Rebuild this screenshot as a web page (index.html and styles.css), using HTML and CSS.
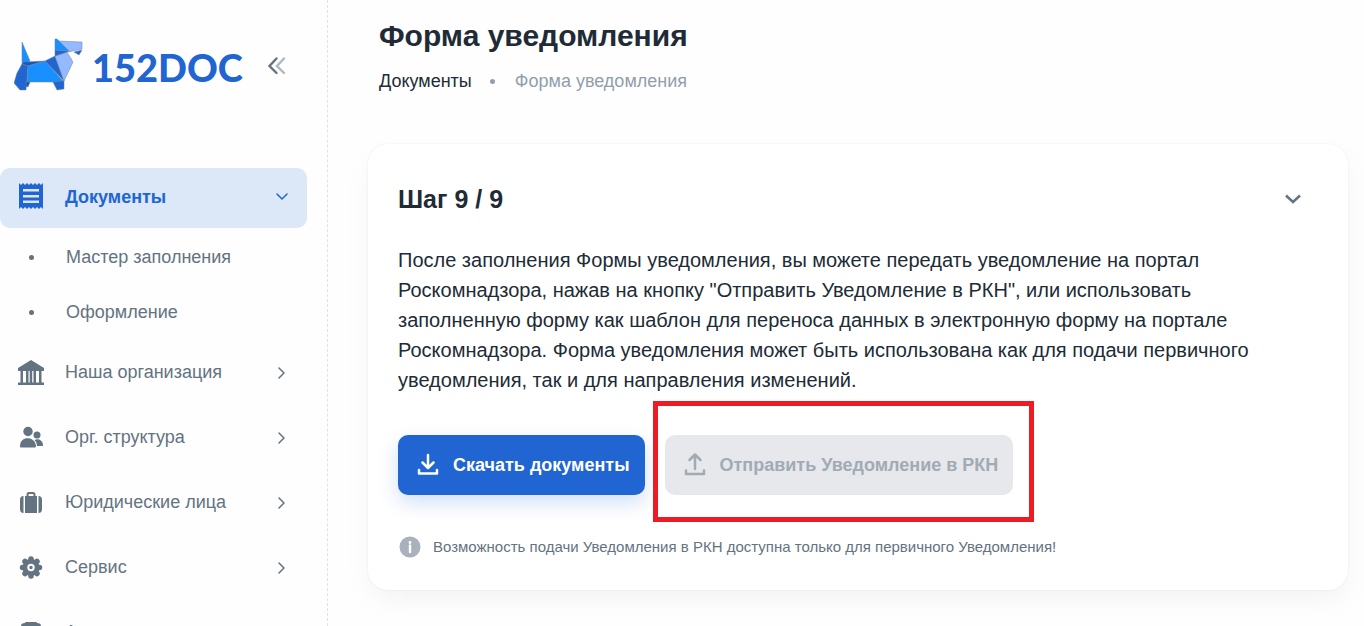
FILE: index.html
```
<!DOCTYPE html>
<html lang="ru">

<head>
    <meta charset="UTF-8">
    <meta name="viewport" content="width=device-width, initial-scale=1">
    <title>Форма уведомления</title>
    <link rel="stylesheet" href="styles.css">
</head>

<body>
    <aside class="sidebar">
        <div class="brand">
            <a class="logo" href="#" aria-label="152DOC">
                <svg class="logo-dog" viewBox="0 0 70 54" aria-hidden="true">
                    <g stroke="#6f8194" stroke-width="0.5" stroke-linejoin="round">
                        <path fill="#1890ff" d="M8 4 L16 23 L8 27 Z" />
                        <path fill="#2065d1" d="M8 26 L14 28 L13 42 L12 52 L6 52 L0 45 L3 35 Z" />
                        <path fill="#1a56bd" d="M8 26 L10 24 L31 23 L14 28 Z" />
                        <path fill="#1890ff" d="M14 28 L31 23 L50 44 L13 44 Z" />
                        <path fill="#2065d1" d="M31 23 L41 18 L50 43 Z" />
                        <path fill="#93b9ff" d="M41 18 L53 14 L59 24 L50 43 Z" />
                        <path fill="#2065d1" d="M41 12 L56 13 L41 18 Z" />
                        <path fill="#93b9ff" d="M44 3 L68 4 L68 11 L54 14 Z" />
                        <path fill="#1890ff" d="M41 1 L43 1 L55 13 L41 12 Z" />
                        <path fill="#2065d1" d="M60 14 L68 12 L65 17 Z" />
                        <path fill="#2065d1" d="M39 44 L50 43 L50 51 L43 52 Z" />
                        <path fill="#1a56bd" d="M12 44 L16 44 L14 49 L12 48 Z" />
                    </g>
                </svg>
                <span class="logo-text">152DOC</span>
            </a>
            <button class="collapse" type="button" aria-label="Свернуть меню">
                <svg viewBox="0 0 20 20" fill="none" stroke="currentColor" stroke-width="2.400" stroke-linecap="round">
                    <path d="M9.500 3.500 L2.500 11 L9.500 18" />
                    <path opacity="0.5" d="M17 3.500 L10 11 L17 18" />
                </svg>
            </button>
        </div>

        <nav class="menu">
            <a class="item active" href="#">
                <svg class="icon" viewBox="0 0 28 28" fill="currentColor">
                    <path fill-rule="evenodd" d="M2 0 L4 2 L6 0 L8 2 L10 0 L12 2 L14 0 L16 2 L18 0 L20 2 L22 0 L24 2 L26 0 V26 L24 24 L22 26 L20 24 L18 26 L16 24 L14 26 L12 24 L10 26 L8 24 L6 26 L4 24 L2 26 Z M6 6 V8.500 H22 V6 Z M6 12 V14.500 H22 V12 Z M6 17.500 V20 H22 V17.500 Z" />
                </svg>
                <span>Документы</span>
                <svg class="arrow" viewBox="0 0 16 16"><path d="M3 5 L8 10 L13 5" /></svg>
            </a>
            <ul class="submenu">
                <li><a class="subitem" href="#">Мастер заполнения</a></li>
                <li><a class="subitem" href="#">Оформление</a></li>
            </ul>
            <a class="item" href="#">
                <svg class="icon" viewBox="0 0 28 28" fill="currentColor">
                    <path d="M14 2 L27 10 V13 H1 V10 Z M3.500 13 H6 V25 H3.500 Z M9 13 H11.500 V25 H9 Z M16.500 13 H19 V25 H16.500 Z M22 13 H24.500 V25 H22 Z M12.700 13 H15.200 V25 H12.700 Z M1 24.500 H27 V27 H1 Z" />
                </svg>
                <span>Наша организация</span>
                <svg class="arrow" viewBox="0 0 16 16"><path d="M5 4 L10 9 L5 14" /></svg>
            </a>
            <a class="item" href="#">
                <svg class="icon" viewBox="0 0 28 28" fill="currentColor">
                    <circle cx="11" cy="8.500" r="4.700" />
                    <circle cx="20" cy="12" r="3.500" />
                    <path d="M3 23 C3 12.500 18 12.500 19 23 C19 24.500 18.500 24.500 17 24.500 H5 C3 24.500 3 24.500 3 23 Z" />
                    <path d="M17.500 17 C22 15 26 18 26 22 C26 23 25.500 23 25 23 H20 C20 21 19 18.500 17.500 17 Z" />
                </svg>
                <span>Орг. структура</span>
                <svg class="arrow" viewBox="0 0 16 16"><path d="M5 4 L10 9 L5 14" /></svg>
            </a>
            <a class="item" href="#">
                <svg class="icon" viewBox="0 0 28 28" fill="currentColor">
                    <path fill-rule="evenodd" d="M9.500 8 V7 Q9.500 4 12 4 H16 Q18.500 4 18.500 7 V8 H20 V25 H8 V8 Z M11.500 8 H16.500 V7 Q16.500 6 15.500 6 H12.500 Q11.500 6 11.500 7 Z" />
                    <path d="M6.500 8 V25 Q3 25 3 21 V12 Q3 8 6.500 8 Z M21.500 8 V25 Q25 25 25 21 V12 Q25 8 21.500 8 Z" />
                </svg>
                <span>Юридические лица</span>
                <svg class="arrow" viewBox="0 0 16 16"><path d="M5 4 L10 9 L5 14" /></svg>
            </a>
            <a class="item" href="#">
                <svg class="icon" viewBox="0 0 28 28">
                    <g stroke="currentColor" stroke-width="5.500" stroke-linecap="round">
                        <path d="M14 6 V23 M5.500 14.500 H22.500 M8 8.500 L20 20.500 M20 8.500 L8 20.500" />
                    </g>
                    <circle cx="14" cy="14.500" r="8.500" fill="currentColor" />
                    <circle cx="14" cy="14.500" r="2.700" fill="none" stroke="#fff" stroke-width="2" />
                </svg>
                <span>Сервис</span>
                <svg class="arrow" viewBox="0 0 16 16"><path d="M5 4 L10 9 L5 14" /></svg>
            </a>
            <a class="item" href="#">
                <svg class="icon" viewBox="0 0 28 28" fill="currentColor">
                    <path d="M9 4 H19 Q20 4 20 5 Q24 5 24 8 V24 H4 V8 Q4 5 8 5 Q8 4 9 4 Z" />
                </svg>
                <span>Архив</span>
                <svg class="arrow" viewBox="0 0 16 16"><path d="M5 4 L10 9 L5 14" /></svg>
            </a>
        </nav>
    </aside>

    <main class="content">
        <header class="page-head">
            <h1>Форма уведомления</h1>
            <ol class="crumbs">
                <li><a href="#">Документы</a></li>
                <li class="current">Форма уведомления</li>
            </ol>
        </header>

        <section class="card">
            <div class="card-head">
                <h2>Шаг 9 / 9</h2>
                <button class="toggle" type="button" aria-label="Свернуть">
                    <svg viewBox="0 0 24 24"><path d="M5 8.500 L12 15 L19 8.500" /></svg>
                </button>
            </div>
            <p class="text">После заполнения Формы уведомления, вы можете передать уведомление на портал Роскомнадзора, нажав на кнопку "Отправить Уведомление в РКН", или использовать заполненную форму как шаблон для переноса данных в электронную форму на портале Роскомнадзора. Форма уведомления может быть использована как для подачи первичного уведомления, так и для направления изменений.</p>
            <div class="actions">
                <button class="btn btn-primary" type="button">
                    <svg viewBox="0 0 26 26"><path d="M13 3 V15 M7.500 10.500 L13 16 L18.500 10.500 M4 18 V21.500 H22 V18" /></svg>
                    Скачать документы
                </button>
                <div class="highlight">
                    <button class="btn" type="button" disabled>
                        <svg viewBox="0 0 26 26"><path d="M13 17 V3 M7.500 8 L13 2.500 L18.500 8 M4 18.500 V22 H22 V18.500" /></svg>
                        Отправить Уведомление в РКН
                    </button>
                </div>
            </div>
            <p class="note">
                <svg viewBox="0 0 22 22">
                    <circle cx="11" cy="11" r="10.500" fill="#a9b2bc" />
                    <path d="M11 9.500 V16" stroke="#fff" stroke-width="2.400" stroke-linecap="round" />
                    <circle cx="11" cy="6.500" r="1.400" fill="#fff" />
                </svg>
                Возможность подачи Уведомления в РКН доступна только для первичного Уведомления!
            </p>
        </section>
    </main>
</body>

</html>
```
FILE: styles.css
```
* {
    box-sizing: border-box;
}

body {
    display: flex;
    align-items: flex-start;
    margin: 0;
    min-height: 100vh;
    background-color: #fefefe;
    color: #212b36;
    font-family: "Liberation Sans", Arial, sans-serif;
    font-size: 18px;
}

h1,
h2,
p,
ul,
ol {
    margin: 0;
    padding: 0;
}

ul,
ol {
    list-style: none;
}

a {
    color: inherit;
    text-decoration: none;
}

button {
    border: 0;
    padding: 0;
    background: none;
    font: inherit;
    cursor: pointer;
}

svg {
    display: block;
    flex-shrink: 0;
}

/* sidebar */

.sidebar {
    flex: 0 0 328px;
    height: 100vh;
    padding-right: 20px;
    border-right: 1px dashed #dfe3e8;
    overflow: hidden;
}

.brand {
    display: flex;
    align-items: center;
    justify-content: space-between;
    height: 168px;
    padding: 0 20px 38px 14px;
}

.logo {
    display: flex;
    align-items: center;
    gap: 8px;
}

.logo-dog {
    width: 70px;
    height: 54px;
}

.logo-text {
    color: #2065d1;
    font-family: Lato, "Liberation Sans", sans-serif;
    font-size: 38px;
    font-weight: 900;
    line-height: 48px;
    padding-top: 4px;
}

.collapse {
    color: #637381;
}

.collapse svg {
    width: 20px;
    height: 20px;
}

.item {
    display: flex;
    align-items: center;
    gap: 20px;
    height: 60px;
    margin-bottom: 5px;
    padding: 0 17px;
    border-radius: 0 10px 10px 0;
    color: #637381;
}

.item span {
    flex: 1;
}

.item.active {
    margin-bottom: 0;
    padding-bottom: 2px;
    border-radius: 10px;
    background-color: #dce7f8;
    color: #2065d1;
    font-weight: bold;
}

.icon {
    width: 28px;
    height: 28px;
}

.arrow {
    width: 16px;
    height: 16px;
    fill: none;
    stroke: currentColor;
    stroke-width: 1.5;
    stroke-linecap: round;
    stroke-linejoin: round;
}

.submenu {
    padding: 2px 0;
}

.subitem {
    display: flex;
    align-items: center;
    gap: 32px;
    height: 55px;
    padding-left: 29px;
    color: #637381;
}

.subitem::before {
    content: "";
    width: 5px;
    height: 5px;
    border-radius: 50%;
    background-color: #637381;
}

/* content */

.content {
    flex: 1;
    min-width: 0;
    padding: 16px 16px 36px 40px;
}

.page-head {
    padding-left: 11px;
    margin-bottom: 52px;
}

h1 {
    font-size: 30px;
    line-height: 40px;
}

.crumbs {
    display: flex;
    align-items: center;
    margin-top: 14px;
    line-height: 22px;
}

.crumbs li {
    display: flex;
    align-items: center;
}

.current {
    color: #919eab;
}

.current::before {
    content: "";
    width: 5px;
    height: 5px;
    margin: 0 20px 0 18px;
    border-radius: 50%;
    background-color: #919eab;
}

.card {
    padding: 35px 30px 31px;
    border-radius: 20px;
    background-color: #fff;
    box-shadow: 0 0 2px rgba(145, 158, 171, 0.2), 0 12px 24px -4px rgba(145, 158, 171, 0.12);
}

.card-head {
    display: flex;
    align-items: center;
    justify-content: space-between;
    padding-right: 13px;
}

h2 {
    font-size: 25px;
    line-height: 40px;
}

.toggle {
    color: #637381;
}

.toggle svg {
    width: 24px;
    height: 24px;
    fill: none;
    stroke: currentColor;
    stroke-width: 2.5;
}

.text {
    max-width: 870px;
    margin-top: 26px;
    font-size: 20px;
    line-height: 30px;
}

.actions {
    display: flex;
    flex-wrap: wrap;
    gap: 20px;
    margin-top: 40px;
}

.btn {
    display: flex;
    align-items: center;
    gap: 12px;
    height: 60px;
    padding: 0 15px 0 17px;
    border-radius: 10px;
    font-weight: bold;
}

.btn svg {
    width: 26px;
    height: 26px;
    fill: none;
    stroke: currentColor;
    stroke-width: 2.5;
    stroke-linecap: round;
    stroke-linejoin: round;
}

.btn-primary {
    background-color: #2065d1;
    color: #fff;
    box-shadow: 0 8px 20px rgba(32, 101, 209, 0.2);
}

.btn:disabled {
    background-color: #e6e8eb;
    color: #a1abb5;
    cursor: default;
}

.highlight {
    position: relative;
}

.highlight::after {
    content: "";
    position: absolute;
    inset: -34px -21px -27px -12px;
    border: 5px solid #ed1c24;
    pointer-events: none;
}

.note {
    display: flex;
    align-items: center;
    gap: 12px;
    margin-top: 40px;
    padding-left: 1px;
    color: #637381;
    font-size: 15px;
    line-height: 24px;
}

.note svg {
    width: 22px;
    height: 22px;
}
```
